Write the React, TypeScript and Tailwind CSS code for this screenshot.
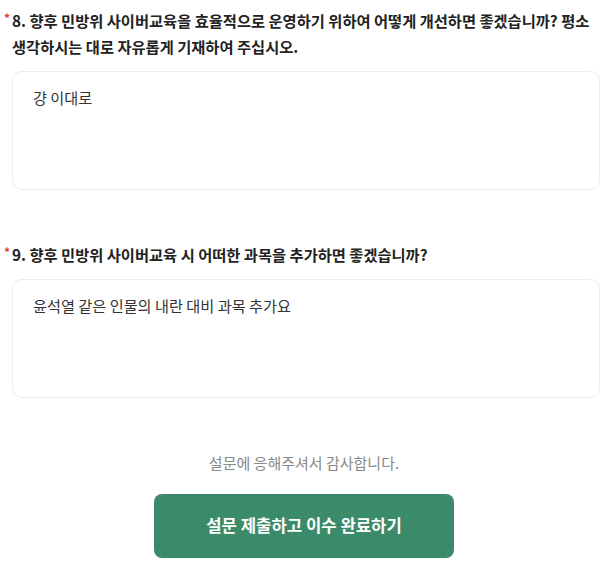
const font = { fontFamily: '"Noto Sans CJK KR", "Noto Sans", sans-serif' };

function Question({ num, text, answer }: { num: number; text: string; answer: string }) {
  return (
    <div>
      <p className="break-keep text-[15.3px] font-semibold leading-[26px] text-[#222]">
        <span className="-ml-[8px] inline-block w-[8px] align-top text-[12px] leading-[22px] text-[#e53935]">*</span>
        {num}. {text}
      </p>
      <div className="mt-[12px] h-[119px] rounded-[10px] border border-[#ececec] px-[20px] pt-[14px] text-[15.2px] text-[#333]">
        {answer}
      </div>
    </div>
  );
}

export default function App() {
  return (
    <div className="min-h-screen bg-white pl-[12px] pr-[8px] pt-[7px]" style={font}>
      <Question
        num={8}
        text="향후 민방위 사이버교육을 효율적으로 운영하기 위하여 어떻게 개선하면 좋겠습니까? 평소 생각하시는 대로 자유롭게 기재하여 주십시오."
        answer="걍 이대로"
      />
      <div className="mt-[51px]">
        <Question
          num={9}
          text="향후 민방위 사이버교육 시 어떠한 과목을 추가하면 좋겠습니까?"
          answer="윤석열 같은 인물의 내란 대비 과목 추가요"
        />
      </div>
      <div className="mt-[54px] flex flex-col items-center pr-[4px]">
        <p className="text-[15px] text-[#888]">설문에 응해주셔서 감사합니다.</p>
        <button className="mt-[19px] h-[64px] w-[300px] rounded-[8px] bg-[#3b8a6a] text-[16.7px] font-semibold text-white">
          설문 제출하고 이수 완료하기
        </button>
      </div>
    </div>
  );
}
